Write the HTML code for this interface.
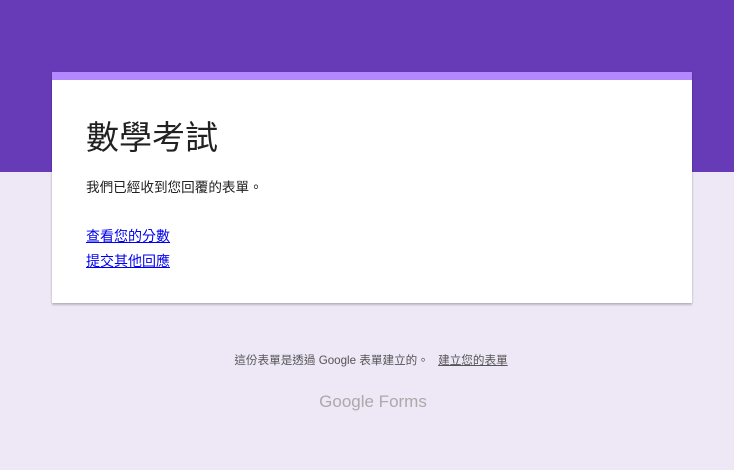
<!DOCTYPE html>
<html><head><meta charset="utf-8"><style>
body{margin:0;width:734px;height:470px;background:#ede7f6;font-family:"Liberation Sans","Noto Sans CJK TC",sans-serif;position:relative;overflow:hidden}
.top{position:absolute;left:0;top:0;width:734px;height:172px;background:#673ab7}
.card{position:absolute;left:52px;top:72px;width:640px;height:231px;background:#fff;border-top:8px solid #b388ff;box-sizing:border-box;box-shadow:0 2px 2px rgba(0,0,0,.2),0 0 2px rgba(0,0,0,.12)}
.t{position:absolute;left:34px;top:38px;font-size:33px;color:#212121;line-height:40px}
.m{position:absolute;left:34px;top:96px;font-size:13.6px;color:#212121}
.l{position:absolute;left:34px;font-size:14px;color:#00e;text-decoration:underline}
.f{position:absolute;top:352px;left:4px;width:734px;text-align:center;font-size:11.6px;color:#555}
.f u{margin-left:6px}
.g{position:absolute;top:392px;left:6px;width:734px;text-align:center;font-size:17px;color:#aaa}
</style></head><body>
<div class="top"></div>
<div class="card">
<div class="t">數學考試</div>
<div class="m">我們已經收到您回覆的表單。</div>
<div class="l" style="top:146px">查看您的分數</div>
<div class="l" style="top:171px">提交其他回應</div>
</div>
<div class="f">這份表單是透過 Google 表單建立的。 <u>建立您的表單</u></div>
<div class="g">Google Forms</div>
</body></html>
